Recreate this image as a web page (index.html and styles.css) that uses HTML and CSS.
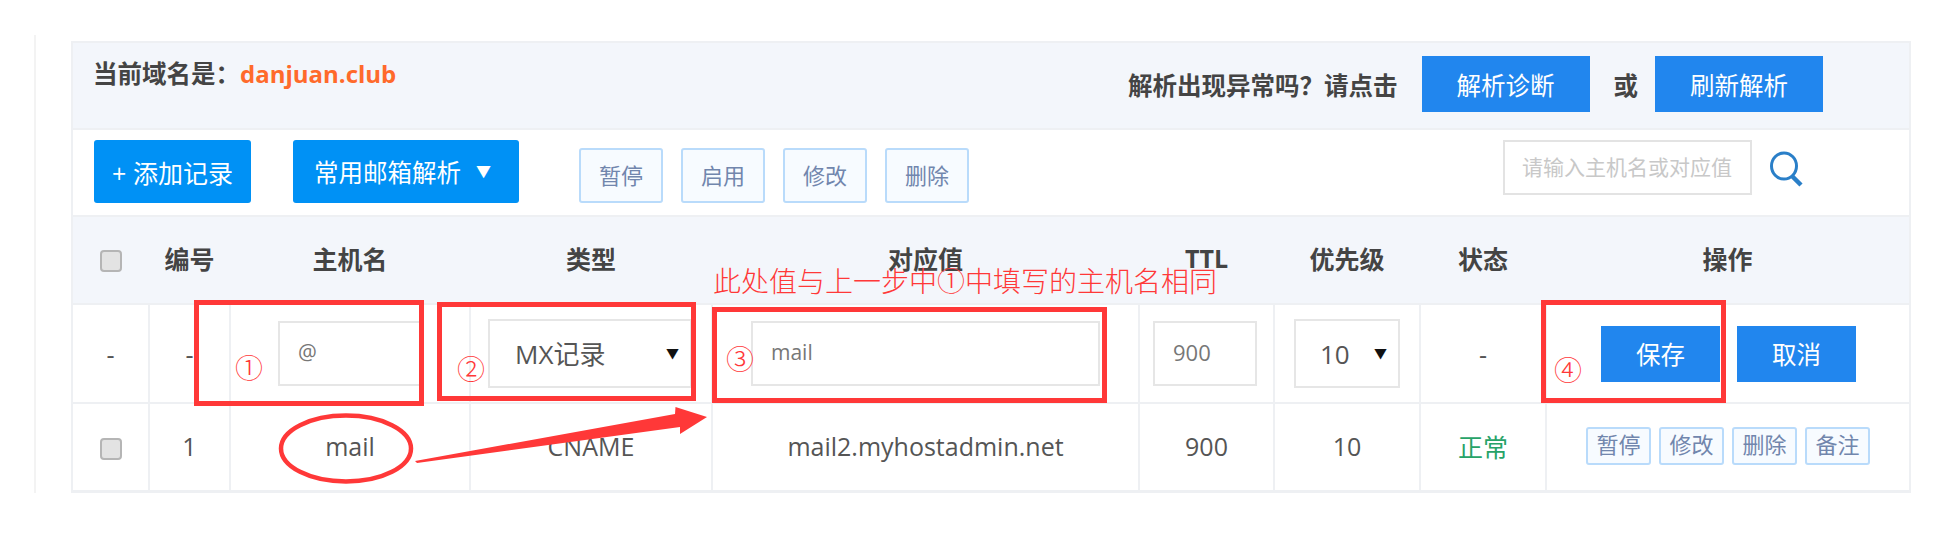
FILE: index.html
```html
<!DOCTYPE html>
<html lang="zh-CN">
<head>
    <meta charset="UTF-8">
    <title>解析记录</title>
    <link rel="stylesheet" href="styles.css">
</head>
<body>
    <div class="page">
        <div class="content">
            <div class="panel">
                <div class="domain-bar">
                    <div class="domain-name">当前域名是：<span class="domain-link">danjuan.club</span></div>
                    <div class="domain-tools">
                        <span class="domain-ask">解析出现异常吗？请点击</span>
                        <button class="btn-flat">解析诊断</button>
                        <span class="domain-or">或</span>
                        <button class="btn-flat">刷新解析</button>
                    </div>
                </div>

                <div class="toolbar">
                    <button class="btn-main btn-add">+ 添加记录</button>
                    <button class="btn-main btn-mail">常用邮箱解析<span class="btn-caret">▼</span></button>
                    <div class="toolbar-group">
                        <button class="btn-light">暂停</button>
                        <button class="btn-light">启用</button>
                        <button class="btn-light">修改</button>
                        <button class="btn-light">删除</button>
                    </div>
                    <div class="search">
                        <div class="search-input">请输入主机名或对应值</div>
                        <svg class="search-icon" viewBox="0 0 34 36" width="34" height="36">
                            <ellipse cx="15" cy="15" rx="12.5" ry="13" fill="none" stroke="#2a7fc8" stroke-width="3"/>
                            <path d="M23 25 L32 34" stroke="#2a7fc8" stroke-width="4.5" fill="none"/>
                        </svg>
                    </div>
                </div>

                <table class="records">
                    <colgroup>
                        <col class="col-check">
                        <col class="col-num">
                        <col class="col-host">
                        <col class="col-type">
                        <col class="col-value">
                        <col class="col-ttl">
                        <col class="col-prio">
                        <col class="col-state">
                        <col class="col-ops">
                    </colgroup>
                    <thead>
                        <tr>
                            <th><span class="check"></span></th>
                            <th>编号</th>
                            <th>主机名</th>
                            <th>类型</th>
                            <th>对应值</th>
                            <th>TTL</th>
                            <th>优先级</th>
                            <th>状态</th>
                            <th>操作</th>
                        </tr>
                    </thead>
                    <tbody>
                        <tr class="row-edit">
                            <td>-</td>
                            <td>-</td>
                            <td class="cell-host"><div class="field field-host">@</div></td>
                            <td><div class="picker picker-type">MX记录<span class="picker-caret">▼</span></div></td>
                            <td><div class="field field-value">mail</div></td>
                            <td><div class="field field-ttl">900</div></td>
                            <td><div class="picker picker-prio">10<span class="picker-caret">▼</span></div></td>
                            <td>-</td>
                            <td>
                                <div class="edit-actions">
                                    <button class="btn-flat btn-edit">保存</button>
                                    <button class="btn-flat btn-edit">取消</button>
                                </div>
                            </td>
                        </tr>
                        <tr class="row-data">
                            <td><span class="check"></span></td>
                            <td>1</td>
                            <td>mail</td>
                            <td>CNAME</td>
                            <td>mail2.myhostadmin.net</td>
                            <td>900</td>
                            <td>10</td>
                            <td class="state-ok">正常</td>
                            <td>
                                <div class="row-actions">
                                    <button class="btn-light btn-small">暂停</button>
                                    <button class="btn-light btn-small">修改</button>
                                    <button class="btn-light btn-small">删除</button>
                                    <button class="btn-light btn-small">备注</button>
                                </div>
                            </td>
                        </tr>
                    </tbody>
                </table>
            </div>
        </div>
    </div>

    <!-- red markup drawn over the screenshot -->
    <div class="mark-box mark-box-1"></div>
    <div class="mark-box mark-box-2"></div>
    <div class="mark-box mark-box-3"></div>
    <div class="mark-box mark-box-4"></div>
    <span class="mark-num mark-num-1">①</span>
    <span class="mark-num mark-num-2">②</span>
    <span class="mark-num mark-num-3">③</span>
    <span class="mark-num mark-num-4">④</span>
    <div class="mark-note">此处值与上一步中①中填写的主机名相同</div>
    <svg class="mark-lines" viewBox="0 0 1941 539" width="1941" height="539">
        <ellipse cx="346" cy="448.5" rx="65" ry="33" fill="none" stroke="#ff3838" stroke-width="4.5"/>
        <polygon points="415,461 675,414 675.5,407 707,417 680,434 680,427 417,463" fill="#ff3838"/>
    </svg>
</body>
</html>
```

FILE: styles.css
```css
* {
    box-sizing: border-box;
}

body {
    margin: 0;
    width: 1941px;
    height: 539px;
    overflow: hidden;
    background-color: #fff;
    font-family: "Open Sans", "Noto Sans CJK SC", sans-serif;
    font-size: 25px;
    color: #555;
}

button {
    font-family: inherit;
    border: none;
    padding: 0;
}

.page {
    padding: 35px 0 0 34px;
}

.content {
    height: 458px;
    padding: 6px 0 0 35px;
    border-left: 2px solid #f3f3f3;
}

.panel {
    width: 1840px;
    border: 2px solid #eef0f3;
    border-bottom-width: 3px;
}

.domain-bar {
    display: flex;
    justify-content: space-between;
    height: 87px;
    padding: 13px 86px 0 20px;
    background-color: #f3f6fb;
    border-bottom: 2px solid #eef0f3;
}

.domain-name {
    font-size: 24.5px;
    font-weight: bold;
    line-height: 36px;
    color: #444;
}

.domain-link {
    font-size: 24px;
    color: #ff6a2b;
}

.domain-tools {
    display: flex;
    align-items: center;
    height: 56px;
    font-size: 24.5px;
    font-weight: bold;
    color: #444;
}

.domain-ask {
    margin-right: 24px;
}

.domain-or {
    margin: 0 17px 0 24px;
}

.btn-flat {
    width: 168px;
    height: 56px;
    background-color: #2186ee;
    color: #fff;
    font-size: 24.5px;
}

.toolbar {
    display: flex;
    height: 87px;
    padding: 10px 0 0 21px;
    background-color: #fff;
    border-bottom: 2px solid #eef0f3;
}

.btn-main {
    height: 63px;
    background-color: #0091f5;
    color: #fff;
    font-size: 25px;
    border-radius: 3px;
}

.btn-add {
    width: 157px;
    margin-right: 42px;
}

.btn-mail {
    width: 226px;
    margin-right: 60px;
    padding-right: 7px;
    font-size: 24.5px;
}

.btn-caret {
    margin-left: 15px;
    font-size: 15px;
    vertical-align: 5px;
}

.toolbar-group {
    display: flex;
    gap: 18px;
    padding-top: 8px;
}

.btn-light {
    width: 84px;
    height: 55px;
    padding-bottom: 4px;
    background-color: #f7fbff;
    border: 2px solid #b9dbfb;
    border-radius: 3px;
    color: #7186ad;
    font-size: 22px;
}

.search {
    display: flex;
    margin-left: auto;
    padding-right: 106px;
}

.search-input {
    width: 249px;
    height: 55px;
    padding-left: 17px;
    border: 2px solid #e3e3e3;
    font-size: 21px;
    line-height: 51px;
    color: #c8c8c8;
}

.search-icon {
    margin: 11px 0 0 17px;
}

.records {
    width: 100%;
    table-layout: fixed;
    border-collapse: collapse;
}

.col-check { width: 76px; }
.col-num { width: 81px; }
.col-host { width: 240px; }
.col-type { width: 242px; }
.col-value { width: 427px; }
.col-ttl { width: 135px; }
.col-prio { width: 146px; }
.col-state { width: 126px; }

.records th {
    height: 87px;
    background-color: #f3f6fb;
    font-size: 25px;
    font-weight: bold;
    color: #444;
    padding: 0 0 4px;
}

.records td {
    padding: 0;
    text-align: center;
    border-top: 2px solid #eef0f3;
    border-left: 2px solid #eef0f3;
}

.records td:first-child {
    border-left: none;
}

.row-edit td {
    height: 99px;
}

.row-data td {
    height: 87px;
    padding-bottom: 2px;
}

.check {
    display: inline-block;
    width: 22px;
    height: 22px;
    vertical-align: middle;
    background-color: #e3e3e3;
    border: 2px solid #b5b5b5;
    border-radius: 4px;
}

.field,
.picker {
    position: relative;
    margin: 0 auto;
    text-align: left;
    border: 2px solid #e6e6e6;
}

.field {
    height: 65px;
    padding-left: 18px;
    font-size: 21px;
    line-height: 58px;
    color: #777;
}

.field-host {
    width: 146px;
    margin-left: 47px;
}

.field-value {
    width: 349px;
    margin-left: 38px;
}

.field-ttl {
    width: 104px;
    margin-left: 13px;
    font-size: 22px;
}

.picker {
    height: 69px;
    font-size: 26px;
    line-height: 66px;
    color: #555;
}

.picker-type {
    width: 204px;
    margin-left: 17px;
    padding-left: 25px;
}

.picker-prio {
    width: 106px;
    margin-left: 19px;
    padding-left: 24px;
}

.picker-caret {
    position: absolute;
    top: -1px;
    right: 11px;
    font-size: 13px;
    color: #111;
}

.edit-actions {
    display: flex;
    gap: 17px;
    padding-left: 54px;
}

.btn-edit {
    width: 119px;
}

.row-actions {
    display: flex;
    gap: 8px;
    padding-left: 39px;
}

.btn-small {
    width: 65px;
    height: 38px;
    line-height: 28px;
}

.state-ok {
    color: #27a368;
}

/* annotations */
.mark-box {
    position: absolute;
    border: 5px solid #ff3838;
}

.mark-box-1 { left: 194px; top: 300px; width: 230px; height: 106px; }
.mark-box-2 { left: 437px; top: 302px; width: 259px; height: 99px; }
.mark-box-3 { left: 712px; top: 307px; width: 395px; height: 96px; }
.mark-box-4 { left: 1541px; top: 300px; width: 185px; height: 103px; }

.mark-num {
    position: absolute;
    font-family: "Noto Sans CJK SC", sans-serif;
    font-size: 28px;
    font-weight: 300;
    line-height: 28px;
    width: 28px;
    text-align: center;
    color: #ff3838;
}

.mark-num-1 { left: 235px; top: 353px; }
.mark-num-2 { left: 457px; top: 354px; }
.mark-num-3 { left: 726px; top: 344px; }
.mark-num-4 { left: 1554px; top: 355px; }

.mark-note {
    position: absolute;
    left: 713px;
    top: 260px;
    font-family: "Noto Sans CJK SC", sans-serif;
    font-size: 28px;
    font-weight: 300;
    line-height: 40px;
    white-space: nowrap;
    color: #ff3838;
}

.mark-lines {
    position: absolute;
    left: 0;
    top: 0;
}
```
